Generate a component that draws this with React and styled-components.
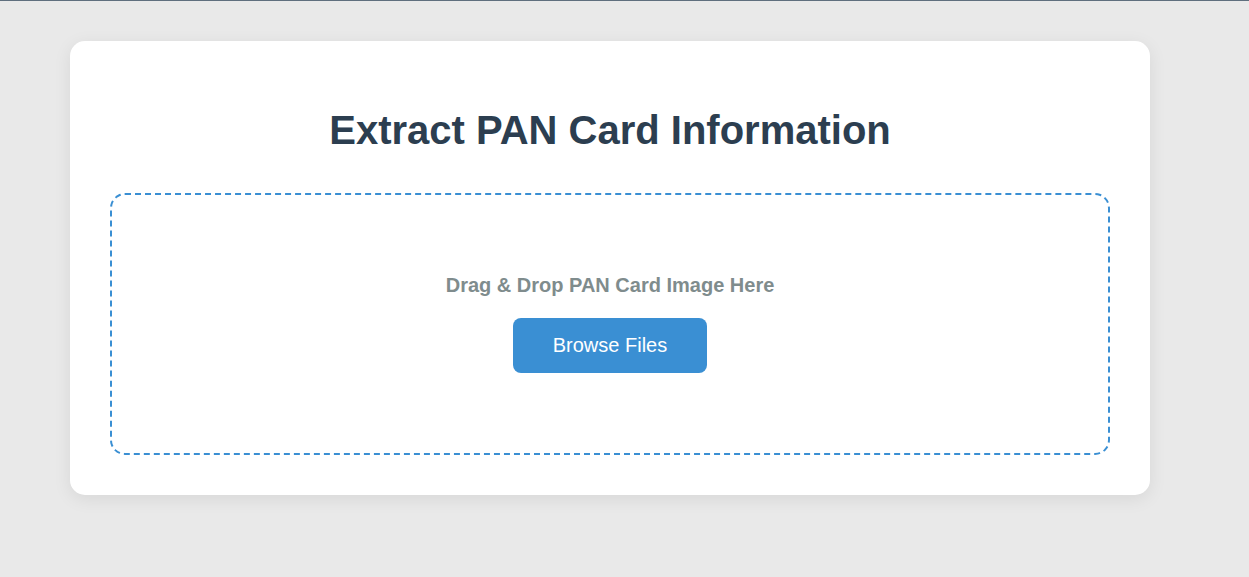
import React from 'react';
import styled, { createGlobalStyle } from 'styled-components';

const GlobalStyle = createGlobalStyle`
  html, body {
    margin: 0;
    padding: 0;
  }

  body {
    background-color: #e9e9e9;
    border-top: 1px solid #5f6f7e;
    font-family: "Liberation Sans", Arial, sans-serif;
    min-height: 576px;
  }
`;

const Page = styled.main`
  padding: 40px 70px;
`;

const Card = styled.section`
  width: 1080px;
  box-sizing: border-box;
  background: #ffffff;
  border-radius: 15px;
  padding: 66px 40px 40px;
  box-shadow: 0 4px 18px rgba(0, 0, 0, 0.08);
`;

const Title = styled.h1`
  margin: 0 0 40px;
  text-align: center;
  font-size: 40px;
  font-weight: 700;
  line-height: 46px;
  color: #2c3e50;
`;

const DropZone = styled.div`
  height: 262px;
  box-sizing: border-box;
  padding-bottom: 2px;
  border: 2px dashed #3a8fd3;
  border-radius: 15px;
  display: flex;
  flex-direction: column;
  align-items: center;
  justify-content: center;
  gap: 21px;
`;

const Hint = styled.p`
  margin: 0;
  font-size: 20px;
  font-weight: 700;
  line-height: 23px;
  color: #7f8c8d;
`;

const BrowseButton = styled.button`
  width: 194px;
  height: 55px;
  border: none;
  border-radius: 8px;
  background: #3a8fd3;
  color: #ffffff;
  font-family: inherit;
  font-size: 20px;
  cursor: pointer;

  &:hover {
    background: #2f7fc0;
  }
`;

const App = () => {
  return (
    <>
      <GlobalStyle />
      <Page>
        <Card>
          <Title>Extract PAN Card Information</Title>
          <DropZone>
            <Hint>Drag &amp; Drop PAN Card Image Here</Hint>
            <BrowseButton type="button">Browse Files</BrowseButton>
          </DropZone>
        </Card>
      </Page>
    </>
  );
};

export default App;
